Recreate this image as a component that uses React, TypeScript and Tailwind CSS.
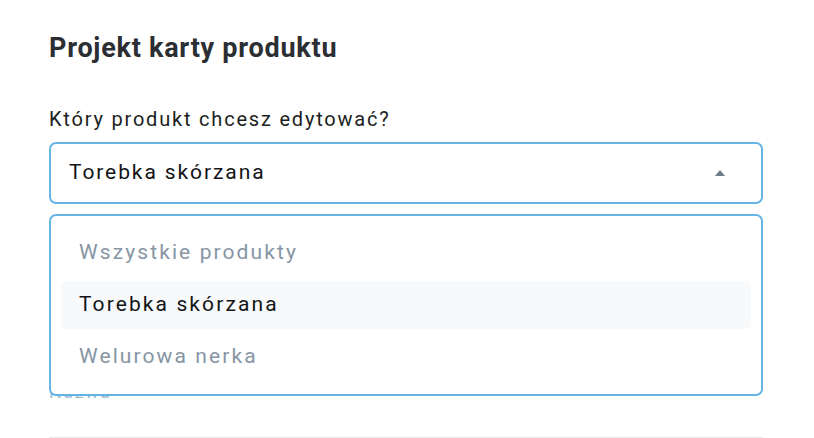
import { useState } from 'react';

const OPTIONS = ['Wszystkie produkty', 'Torebka skórzana', 'Welurowa nerka'];

export default function App() {
  const [selected, setSelected] = useState('Torebka skórzana');

  return (
    <main className="h-[438px] w-[814px] overflow-hidden bg-white pl-[49px] pr-[51px] pt-[32px] font-['Roboto',sans-serif]">
      <h1 className="text-[27px] font-bold leading-[32px] tracking-[0.75px] text-[#2b2e33]">Projekt karty produktu</h1>

      <label className="mt-[43px] block text-[20px] leading-[24px] tracking-[1.8px] text-[#1c1e21]">
        Który produkt chcesz edytować?
      </label>

      <div className="relative mt-[11px]">
        <button
          type="button"
          className="flex h-[62px] w-full items-center justify-between rounded-[7px] border-2 border-[#66b4e4] bg-white pl-[18px] pr-[36px] text-left text-[21px] tracking-[1.9px] text-[#121416]"
        >
          <span>{selected}</span>
          <svg width="10" height="6" viewBox="0 0 10 6" className="text-[#6f7b88]">
            <path d="M5 0 L10 6 L0 6 Z" fill="currentColor" />
          </svg>
        </button>

        <div className="absolute left-0 right-0 top-[72px] z-10 rounded-[7px] border-2 border-[#66b4e4] bg-white px-[10px] py-[13px]">
          <ul className="flex flex-col gap-[4px]">
            {OPTIONS.map((option) => (
              <li
                key={option}
                onClick={() => setSelected(option)}
                className={
                  option === selected
                    ? 'flex h-[48px] items-center rounded-[6px] bg-[#f7f9fb] px-[18px] text-[21px] tracking-[2.1px] text-[#121416]'
                    : 'flex h-[48px] items-center rounded-[6px] px-[18px] text-[21px] tracking-[2.1px] text-[#8795a4]'
                }
              >
                {option}
              </li>
            ))}
          </ul>
        </div>

        <div className="mt-[176px] text-[18px] leading-[24px] tracking-[1.5px] text-[#9dbdd6]">Nazwa</div>
        <div className="mt-[33px] border-t border-[#e8eaed]" />
      </div>
    </main>
  );
}
